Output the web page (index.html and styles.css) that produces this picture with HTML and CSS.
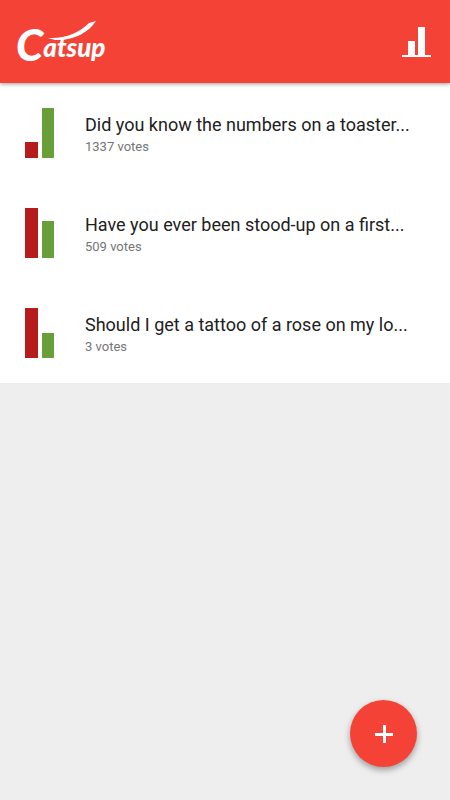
FILE: index.html
```html
<!DOCTYPE html>
<html lang="en">
<head>
<meta charset="utf-8">
<meta name="viewport" content="width=device-width, initial-scale=1">
<title>Catsup</title>
<link rel="stylesheet" href="styles.css">
</head>
<body>
<header class="bar">
  <h1 class="logo">Catsup
    <svg class="swoosh" viewBox="0 0 48 20" aria-hidden="true"><path d="M0 17C17 18 31 12 41 2L48 0C41 11 26 20 7 19Z"/></svg>
  </h1>
  <button class="stats" type="button" aria-label="Results">
    <svg viewBox="0 0 30 32" aria-hidden="true"><path d="M1 29h29v2H1zM7 15h7v14H7zM17 1h7v28h-7z"/></svg>
  </button>
</header>
<main>
  <ul class="polls">
    <li><a class="poll" href="#toaster">
      <svg class="chart" viewBox="0 0 30 50" aria-hidden="true"><path class="no" d="M0 34h13v16H0z"/><path class="yes" d="M17 0h12v50H17z"/></svg>
      <span class="text"><span class="title">Did you know the numbers on a toaster...</span><span class="votes">1337 votes</span></span>
    </a></li>
    <li><a class="poll" href="#date">
      <svg class="chart" viewBox="0 0 30 50" aria-hidden="true"><path class="no" d="M0 0h13v50H0z"/><path class="yes" d="M17 13h12v37H17z"/></svg>
      <span class="text"><span class="title">Have you ever been stood-up on a first...</span><span class="votes">509 votes</span></span>
    </a></li>
    <li><a class="poll" href="#tattoo">
      <svg class="chart" viewBox="0 0 30 50" aria-hidden="true"><path class="no" d="M0 0h13v50H0z"/><path class="yes" d="M17 25h12v25H17z"/></svg>
      <span class="text"><span class="title">Should I get a tattoo of a rose on my lo...</span><span class="votes">3 votes</span></span>
    </a></li>
  </ul>
</main>
<button class="add" type="button" aria-label="New poll">
  <svg viewBox="0 0 18 18" aria-hidden="true"><path d="M8 0h3v8h7v3h-7v7H8v-7H0V8h8z"/></svg>
</button>
</body>
</html>
```

FILE: styles.css
```css
* {
  box-sizing: border-box;
}

body {
  margin: 0;
  min-height: 100vh;
  background: #eeeeee;
  font-family: Roboto, sans-serif;
}

button {
  padding: 0;
  border: 0;
  cursor: pointer;
}

svg {
  display: block;
  fill: #ffffff;
}

.bar {
  position: relative;
  display: flex;
  align-items: center;
  justify-content: space-between;
  min-height: 83px;
  padding: 0 19px 0 16px;
  background: #f44336;
  box-shadow: 0 1px 4px rgba(0, 0, 0, 0.4);
}

.logo {
  position: relative;
  margin: 0;
  padding-top: 10px;
  color: #ffffff;
  font: italic 900 26px/44px Lato, sans-serif;
}

.logo::first-letter {
  font-size: 44px;
  line-height: 26px;
  vertical-align: -4px;
}

.swoosh {
  position: absolute;
  top: 6px;
  left: 32px;
  width: 48px;
  height: 20px;
}

.stats {
  background: none;
}

.stats svg {
  width: 30px;
  height: 32px;
}

.polls {
  margin: 0;
  padding: 0;
  list-style: none;
  background: #ffffff;
}

.poll {
  display: flex;
  align-items: center;
  gap: 30px;
  height: 100px;
  padding: 0 25px;
  color: #212121;
  text-decoration: none;
}

.chart {
  flex: none;
  width: 30px;
  height: 50px;
}

.no {
  fill: #b71c1c;
}

.yes {
  fill: #689f38;
}

.text {
  display: flex;
  flex-direction: column;
  min-width: 0;
  padding-top: 4px;
}

.title {
  overflow: hidden;
  font-size: 18px;
  line-height: 24px;
  text-overflow: ellipsis;
  white-space: nowrap;
}

.votes {
  color: #757575;
  font-size: 13px;
  line-height: 20px;
}

.add {
  position: fixed;
  right: 33px;
  bottom: 33px;
  display: grid;
  place-items: center;
  width: 67px;
  height: 67px;
  border-radius: 50%;
  background: #f44336;
  box-shadow: 0 3px 6px rgba(0, 0, 0, 0.35);
}

.add svg {
  width: 18px;
  height: 18px;
}
```
